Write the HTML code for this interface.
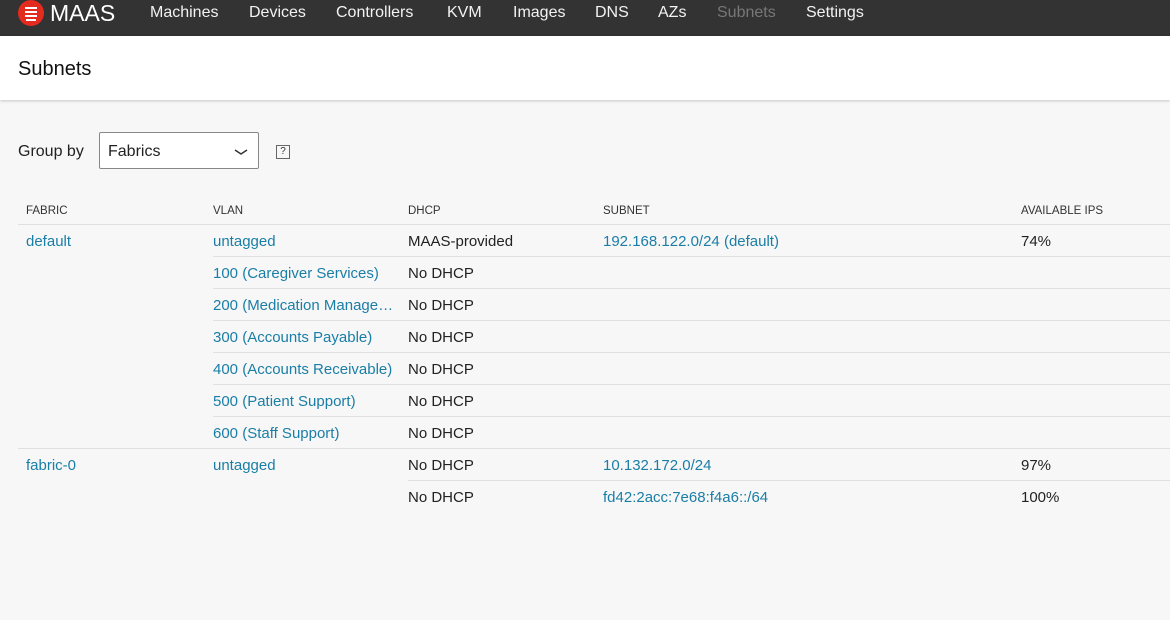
<!DOCTYPE html>
<html><head><meta charset="utf-8"><style>
*{margin:0;padding:0;box-sizing:border-box}
body{width:1170px;height:620px;background:#f7f7f7;font-family:"Liberation Sans",sans-serif;color:#222;position:relative;overflow:hidden}
.nav{position:absolute;left:0;top:0;width:1170px;height:36px;background:#333}
.nav span{position:absolute;top:4px;font-size:16px;color:#f2f2f2;white-space:nowrap}
.logo{position:absolute;left:18px;top:0;width:26px;height:26px;border-radius:50%;background:#e32b1f}
.logo i{position:absolute;left:7px;width:12px;height:2px;background:#fff}
.hdr{position:absolute;left:0;top:36px;width:1170px;height:64px;background:#fff;box-shadow:0 1px 3px rgba(0,0,0,.2)}
.hdr h1{position:absolute;left:18px;top:22px;font-size:20px;font-weight:normal;color:#111}
.t{position:absolute;font-size:15px;white-space:nowrap;margin-top:2px}
.h{position:absolute;font-size:11.5px;color:#333;top:205px}
a,.a{color:#1a7ea6;text-decoration:none}
.ln{position:absolute;height:1px;background:#e0e0e0}
</style></head><body>
<div class="nav">
<div class="logo"><i style="top:7px"></i><i style="top:11px"></i><i style="top:15px"></i><i style="top:19px;width:10px;left:8px"></i></div>
<span style="left:50px;top:0px;font-size:23px;color:#fff">MAAS</span>
<span style="left:150px">Machines</span>
<span style="left:249px">Devices</span>
<span style="left:336px">Controllers</span>
<span style="left:447px">KVM</span>
<span style="left:513px">Images</span>
<span style="left:595px">DNS</span>
<span style="left:658px">AZs</span>
<span style="left:717px;color:#777">Subnets</span>
<span style="left:806px">Settings</span>
</div>
<div class="hdr"><h1>Subnets</h1></div>
<div class="t" style="left:18px;top:141px;font-size:16px">Group by</div>
<div style="position:absolute;left:99px;top:132px;width:160px;height:37px;border:1px solid #888;background:#fff;border-radius:2px">
<span style="position:absolute;left:8px;top:10px;font-size:16px">Fabrics</span>
<svg style="position:absolute;left:133px;top:14px" width="16" height="10"><path d="M2 3 L8 7 L14 3" stroke="#333" stroke-width="1.5" fill="none"/></svg>
</div>
<div style="position:absolute;left:276px;top:145px;width:14px;height:14px;border:1px solid #666;font-size:10px;text-align:center;line-height:12px;color:#333">?</div>

<div class="h" style="left:26px">FABRIC</div>
<div class="h" style="left:213px">VLAN</div>
<div class="h" style="left:408px">DHCP</div>
<div class="h" style="left:603px">SUBNET</div>
<div class="h" style="left:1021px">AVAILABLE IPS</div>
<div class="ln" style="left:18px;width:1152px;top:224px"></div>

<div class="t a" style="left:26px;top:231px">default</div>
<div class="t a" style="left:213px;top:231px">untagged</div>
<div class="t" style="left:408px;top:231px">MAAS-provided</div>
<div class="t a" style="left:603px;top:231px">192.168.122.0/24 (default)</div>
<div class="t" style="left:1021px;top:231px">74%</div>
<div class="ln" style="left:213px;width:957px;top:256px"></div>

<div class="t a" style="left:213px;top:263px">100 (Caregiver Services)</div>
<div class="t" style="left:408px;top:263px">No DHCP</div>
<div class="ln" style="left:213px;width:957px;top:288px"></div>
<div class="t a" style="left:213px;top:295px;width:188px;overflow:hidden;text-overflow:ellipsis">200 (Medication Management)</div>
<div class="t" style="left:408px;top:295px">No DHCP</div>
<div class="ln" style="left:213px;width:957px;top:320px"></div>
<div class="t a" style="left:213px;top:327px">300 (Accounts Payable)</div>
<div class="t" style="left:408px;top:327px">No DHCP</div>
<div class="ln" style="left:213px;width:957px;top:352px"></div>
<div class="t a" style="left:213px;top:359px">400 (Accounts Receivable)</div>
<div class="t" style="left:408px;top:359px">No DHCP</div>
<div class="ln" style="left:213px;width:957px;top:384px"></div>
<div class="t a" style="left:213px;top:391px">500 (Patient Support)</div>
<div class="t" style="left:408px;top:391px">No DHCP</div>
<div class="ln" style="left:213px;width:957px;top:416px"></div>
<div class="t a" style="left:213px;top:423px">600 (Staff Support)</div>
<div class="t" style="left:408px;top:423px">No DHCP</div>
<div class="ln" style="left:18px;width:1152px;top:448px"></div>

<div class="t a" style="left:26px;top:455px">fabric-0</div>
<div class="t a" style="left:213px;top:455px">untagged</div>
<div class="t" style="left:408px;top:455px">No DHCP</div>
<div class="t a" style="left:603px;top:455px">10.132.172.0/24</div>
<div class="t" style="left:1021px;top:455px">97%</div>
<div class="ln" style="left:408px;width:762px;top:480px"></div>
<div class="t" style="left:408px;top:487px">No DHCP</div>
<div class="t a" style="left:603px;top:487px">fd42:2acc:7e68:f4a6::/64</div>
<div class="t" style="left:1021px;top:487px">100%</div>
</body></html>
